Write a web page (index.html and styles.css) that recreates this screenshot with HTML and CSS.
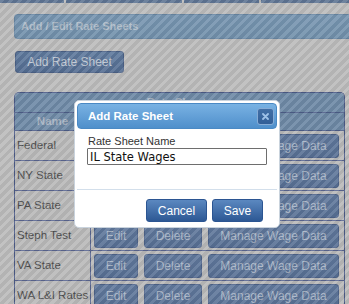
FILE: index.html
```html
<!DOCTYPE html>
<html>
<head>
<meta charset="utf-8">
<link rel="stylesheet" href="styles.css">
</head>
<body>
<div class="page">
  <div class="prev-strip">
    <div class="prev-cell c1"></div>
    <div class="prev-cell c2"></div>
    <div class="prev-cell c3"></div>
    <div class="prev-cell c4"></div>
  </div>
  <div class="section-title">Add / Edit Rate Sheets</div>
  <div class="add-row"><button class="btn add-btn">Add Rate Sheet</button></div>
  <div class="sheets">
    <div class="sheets-caption">Rate Sheets</div>
    <div class="sheets-head">
      <div class="col-name">Name</div>
      <div class="col-actions"></div>
    </div>
    <div class="sheet-row"><div class="col-name">Federal</div><div class="col-actions"><button class="btn rb edit">Edit</button><button class="btn rb del">Delete</button><button class="btn rb wage">Manage Wage Data</button></div></div>
    <div class="sheet-row"><div class="col-name">NY State</div><div class="col-actions"><button class="btn rb edit">Edit</button><button class="btn rb del">Delete</button><button class="btn rb wage">Manage Wage Data</button></div></div>
    <div class="sheet-row"><div class="col-name">PA State</div><div class="col-actions"><button class="btn rb edit">Edit</button><button class="btn rb del">Delete</button><button class="btn rb wage">Manage Wage Data</button></div></div>
    <div class="sheet-row"><div class="col-name">Steph Test</div><div class="col-actions"><button class="btn rb edit">Edit</button><button class="btn rb del">Delete</button><button class="btn rb wage">Manage Wage Data</button></div></div>
    <div class="sheet-row"><div class="col-name">VA State</div><div class="col-actions"><button class="btn rb edit">Edit</button><button class="btn rb del">Delete</button><button class="btn rb wage">Manage Wage Data</button></div></div>
    <div class="sheet-row"><div class="col-name">WA L&amp;I Rates</div><div class="col-actions"><button class="btn rb edit">Edit</button><button class="btn rb del">Delete</button><button class="btn rb wage">Manage Wage Data</button></div></div>
  </div>
</div>
<div class="overlay"></div>
<div class="dialog">
  <div class="dialog-title">
    <span>Add Rate Sheet</span>
    <button class="dialog-close" aria-label="close"><svg width="7" height="7" viewBox="0 0 7 7"><path d="M1 1L6 6M6 1L1 6" stroke="#9ec2e8" stroke-width="1.8" stroke-linecap="round"/></svg></button>
  </div>
  <div class="dialog-body">
    <label class="field-label">Rate Sheet Name</label>
    <input class="field-input" type="text" value="IL State Wages">
  </div>
  <div class="dialog-buttons">
    <button class="dbtn cancel">Cancel</button>
    <button class="dbtn save">Save</button>
  </div>
</div>
</body>
</html>
```
FILE: styles.css
```css
html, body {
  margin: 0;
  padding: 0;
  width: 349px;
  height: 304px;
  overflow: hidden;
  background: #bcbcbc;
  font-family: "Liberation Sans", Arial, sans-serif;
}

.page {
  display: flex;
  flex-direction: column;
}

.prev-strip {
  display: flex;
  gap: 2px;
  height: 3px;
}
.prev-cell { background: #5f7594; }
.c1 { width: 64px; }
.c2 { width: 116px; }
.c3 { width: 75px; }
.c4 { flex: 1; }

.section-title {
  margin: 11px -6px 0 14px;
  height: 23px;
  line-height: 23px;
  border: 1px solid #6886a3;
  border-right: none;
  border-radius: 4px 0 0 4px;
  background: linear-gradient(#7896b1, #7190ab);
  color: #aebbc8;
  font-weight: bold;
  font-size: 11px;
  padding-left: 6px;
}

.add-row {
  display: flex;
  margin: 12px 0 0 15px;
}

.btn {
  font-family: "Liberation Sans", Arial, sans-serif;
  border-radius: 3px;
  padding: 0;
  cursor: pointer;
}

.add-btn {
  width: 109px;
  height: 22px;
  background: linear-gradient(#5f7a9d, #546d92);
  border: 1px solid #4b6186;
  color: #c0c8d3;
  font-size: 12px;
}

.sheets {
  margin: 19px 0 0 14px;
  width: 331px;
  box-sizing: border-box;
  border: 1px solid #4b5a86;
  border-bottom: none;
  border-radius: 5px 5px 0 0;
  overflow: hidden;
  background: #b9b9b9;
}

.sheets-caption {
  height: 19px;
  line-height: 19px;
  text-align: center;
  background: #6e89a6;
  border-bottom: 1px solid #4d5d87;
  color: #a8b4c2;
  font-weight: bold;
  font-size: 11.5px;
}

.sheets-head {
  display: flex;
  height: 17px;
  background: #6d88a5;
  border-bottom: 1px solid #4d5d87;
}
.sheets-head .col-name {
  color: #a7b3c1;
  font-weight: bold;
  font-size: 11.5px;
  line-height: 17px;
  text-align: center;
  padding-left: 0;
}

.col-name {
  flex: none;
  width: 76px;
  border-right: 1px solid #56648e;
  padding-left: 2px;
  box-sizing: border-box;
}

.col-actions {
  flex: 1;
  display: flex;
  align-items: center;
  gap: 6px;
  padding-left: 3px;
}

.sheet-row {
  display: flex;
  height: 29px;
  border-bottom: 1px solid #5a6690;
}
.sheet-row .col-name {
  color: #4e4e4e;
  font-size: 11.5px;
  line-height: 29px;
  white-space: nowrap;
}

.rb {
  height: 24px;
  background: linear-gradient(#627a9d, #576f94);
  border: 1px solid #4d6389;
  color: #a9b5c6;
  font-size: 12px;
}
.edit { width: 44px; }
.del { width: 58px; }
.wage { width: 131px; }

.overlay {
  position: fixed;
  inset: 0;
  background: repeating-linear-gradient(135deg, rgba(255,255,255,0.1) 0 3px, rgba(0,0,0,0.045) 3px 6.4px);
}

.dialog {
  position: absolute;
  left: 74px;
  top: 100px;
  width: 206px;
  height: 128px;
  box-sizing: border-box;
  background: #ffffff;
  border: 1px solid #c9d3dd;
  border-radius: 5px;
  padding: 2px;
  display: flex;
  flex-direction: column;
}

.dialog-title {
  height: 24px;
  display: flex;
  align-items: center;
  justify-content: space-between;
  padding: 0 2px 0 10px;
  border: 1px solid #4a89c4;
  border-radius: 4px;
  background: linear-gradient(#79b2e3, #4f8fcb);
  color: #ffffff;
  font-weight: bold;
  font-size: 11.5px;
}

.dialog-close {
  width: 17px;
  height: 17px;
  padding: 0;
  display: flex;
  align-items: center;
  justify-content: center;
  border: 1px solid #86acd6;
  border-radius: 3px;
  background: linear-gradient(#416fa6, #325f97);
}

.dialog-body {
  display: flex;
  flex-direction: column;
  padding: 6px 10px 0 10px;
  height: 54px;
  border-bottom: 1px solid #d3dfeb;
}

.field-label {
  font-size: 11px;
  line-height: 13px;
  color: #333333;
  padding-left: 1px;
}

.field-input {
  width: 180px;
  height: 17px;
  box-sizing: border-box;
  margin: 0;
  border: 1px solid #6e6e6e;
  border-radius: 1px;
  padding: 0 2px;
  font-family: "DejaVu Sans", Verdana, sans-serif;
  font-size: 11.5px;
  color: #111111;
}

.dialog-buttons {
  display: flex;
  justify-content: flex-end;
  gap: 5px;
  padding: 9px 14px 0 0;
}

.dbtn {
  height: 23px;
  padding: 0;
  border: 1px solid #2b5592;
  border-radius: 3px;
  background: linear-gradient(#5b88c0, #2d5894);
  color: #ffffff;
  font-family: "Liberation Sans", Arial, sans-serif;
  font-size: 12px;
}
.cancel { width: 61px; }
.save { width: 51px; }
```
